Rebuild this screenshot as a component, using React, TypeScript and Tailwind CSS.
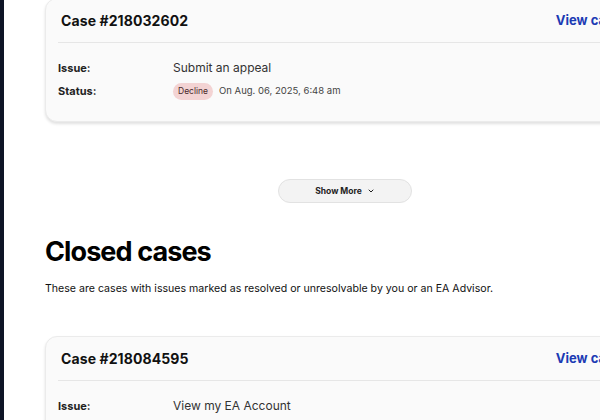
import React from "react";

function Card({ id, issue, status }: { id: string; issue: string; status?: boolean }) {
  return (
    <div className="w-[600px] rounded-[12px] border border-[#ebebeb] bg-[#fafafa] shadow-[0_2px_3px_rgba(0,0,0,0.12)]">
      <div className="flex h-[43px] items-center justify-between pl-[15px] pr-[23px]">
        <div className="text-[14px] font-bold tracking-[0.1px] text-[#111]">Case #{id}</div>
        <div className="text-[13px] font-bold text-[#1c3bb4]">View case</div>
      </div>
      <div className="mx-[12px] h-px bg-[#e6e6e6]" />
      <div className="flex flex-col gap-[3px] px-[12px] pb-[20px] pt-[15px]">
        <div className="flex h-[20px] items-center">
          <div className="w-[115px] text-[11px] font-bold text-[#222]">Issue:</div>
          <div className="text-[12px] text-[#333]">{issue}</div>
        </div>
        {status && (
          <div className="flex h-[20px] items-center">
            <div className="w-[115px] text-[11px] font-bold text-[#222]">Status:</div>
            <div className="flex items-center gap-[6px]">
              <span className="flex h-[17px] items-center rounded-full bg-[#f3d3d3] px-[5px] text-[8.5px] text-[#4a2a2a]">Decline</span>
              <span className="text-[9.5px] text-[#444]">On Aug. 06, 2025, 6:48 am</span>
            </div>
          </div>
        )}
      </div>
    </div>
  );
}

export default function App() {
  return (
    <div
      className="flex h-[420px] w-[600px] overflow-hidden bg-white"
      style={{ fontFamily: "Inter, 'Noto Sans', sans-serif" }}
    >
      <div className="w-[4px] shrink-0 bg-[#0e1526]" />
      <div className="ml-[41px] flex w-[600px] shrink-0 flex-col">
        <div className="-mt-[2px]">
          <Card id="218032602" issue="Submit an appeal" status />
        </div>
        <div className="mt-[57px] flex justify-center">
          <button className="flex h-[24px] w-[134px] items-center justify-center gap-[5px] rounded-full border border-[#e2e2e2] bg-[#f3f3f3] text-[8.5px] font-bold text-[#222]">
            Show More
            <svg width="8" height="8" viewBox="0 0 24 24" fill="none" stroke="#222" strokeWidth="3" strokeLinecap="round" strokeLinejoin="round">
              <path d="M6 9l6 6 6-6" />
            </svg>
          </button>
        </div>
        <h2 className="mt-[32px] text-[27px] font-bold leading-[33px] tracking-[-0.9px] text-black">Closed cases</h2>
        <p className="mt-[13px] text-[10.6px] leading-[16px] text-[#111]">
          These are cases with issues marked as resolved or unresolvable by you or an EA Advisor.
        </p>
        <div className="mt-[39px]">
          <Card id="218084595" issue="View my EA Account" />
        </div>
      </div>
    </div>
  );
}
